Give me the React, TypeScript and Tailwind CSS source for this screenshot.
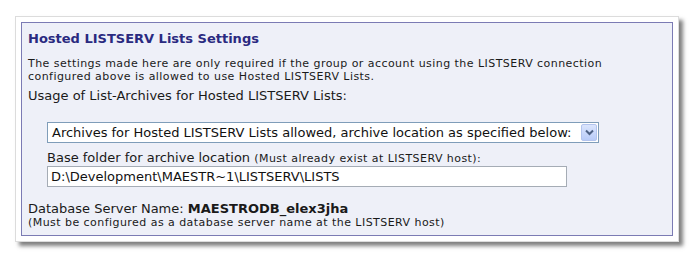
import React from 'react';

function ComboBox({ value }: { value: string }) {
  return (
    <div className="flex items-center w-[552px] h-[21px] bg-white border border-[#7f9db9] pl-[4px] pr-[1px]">
      <span className="flex-1 text-[13px] text-[#111] whitespace-nowrap leading-none">{value}</span>
      <span className="flex items-center justify-center w-[16px] h-[17px] rounded-[2px] border border-[#b3c4ee] bg-gradient-to-b from-[#dbe5fd] to-[#b8cbf8]">
        <svg width="9" height="7" viewBox="0 0 9 7">
          <path d="M1 1.5 L4.5 5 L8 1.5" fill="none" stroke="#4d6185" strokeWidth="2" />
        </svg>
      </span>
    </div>
  );
}

export default function App() {
  return (
    <div className="w-[698px] h-[264px] bg-white pt-[16px] pl-[15px] font-['DejaVu_Sans',Verdana,sans-serif]">
      <div className="w-[664px] bg-white border border-[#dcdcdc] p-[5px] shadow-[4px_4px_4px_rgba(0,0,0,0.5)]">
        <div className="border border-[#7b7bb4] bg-[#eef0f8] pl-[6px] pt-[8px] pb-[6px] text-[#1a1a1a]">
          <h2 className="text-[13px] font-bold text-[#2a2a80] leading-[16px]">Hosted LISTSERV Lists Settings</h2>
          <p className="mt-[10px] text-[11px] tracking-[0.45px] leading-[13px]">
            The settings made here are only required if the group or account using the LISTSERV connection
            <br />
            configured above is allowed to use Hosted LISTSERV Lists.
          </p>
          <p className="mt-[5px] text-[13px] leading-[16px]">Usage of List-Archives for Hosted LISTSERV Lists:</p>
          <div className="pl-[19px] mt-[18px]">
            <ComboBox value="Archives for Hosted LISTSERV Lists allowed, archive location as specified below:" />
            <p className="mt-[7px] text-[13px] leading-[15px]">
              Base folder for archive location{' '}
              <span className="text-[11px] tracking-[0.45px]">(Must already exist at LISTSERV host):</span>
            </p>
            <div className="w-[520px] h-[21px] bg-white border border-[#a5acb5] pl-[3px] flex items-center text-[13px] text-[#111] leading-none">
              D:\Development\MAESTR~1\LISTSERV\LISTS
            </div>
          </div>
          <p className="mt-[14px] text-[13px] leading-[15px]">
            Database Server Name: <span className="font-bold">MAESTRODB_elex3jha</span>
          </p>
          <p className="text-[11px] tracking-[0.45px] leading-[13px]">
            (Must be configured as a database server name at the LISTSERV host)
          </p>
        </div>
      </div>
    </div>
  );
}
